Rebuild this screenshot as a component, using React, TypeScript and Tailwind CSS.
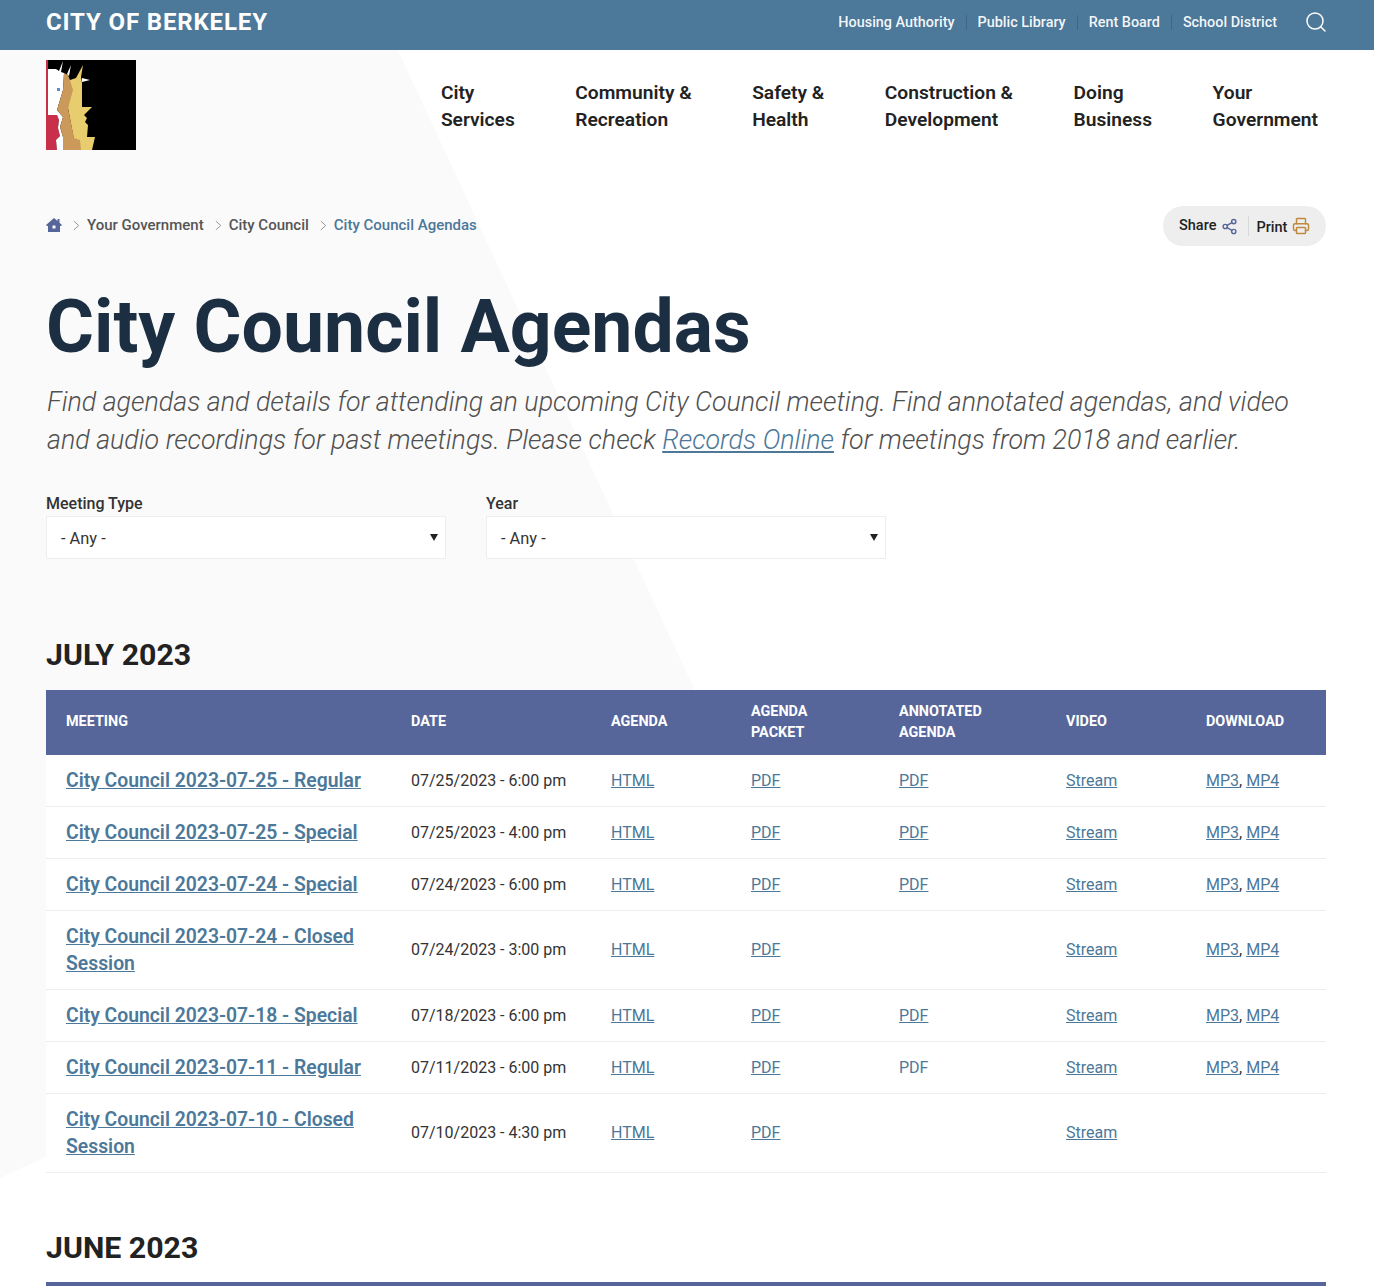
import { Printer, Search, Share2 } from "lucide-react";

const meetings = [
  { title: "City Council 2023-07-25 - Regular", date: "07/25/2023 - 6:00 pm", annotated: "link", downloads: true },
  { title: "City Council 2023-07-25 - Special", date: "07/25/2023 - 4:00 pm", annotated: "link", downloads: true },
  { title: "City Council 2023-07-24 - Special", date: "07/24/2023 - 6:00 pm", annotated: "link", downloads: true },
  { title: "City Council 2023-07-24 - Closed Session", date: "07/24/2023 - 3:00 pm", annotated: "none", downloads: true },
  { title: "City Council 2023-07-18 - Special", date: "07/18/2023 - 6:00 pm", annotated: "link", downloads: true },
  { title: "City Council 2023-07-11 - Regular", date: "07/11/2023 - 6:00 pm", annotated: "plain", downloads: true },
  { title: "City Council 2023-07-10 - Closed Session", date: "07/10/2023 - 4:30 pm", annotated: "none", downloads: false },
];

const navItems = [
  ["City", "Services"],
  ["Community &", "Recreation"],
  ["Safety &", "Health"],
  ["Construction &", "Development"],
  ["Doing", "Business"],
  ["Your", "Government"],
];

const topLinks = ["Housing Authority", "Public Library", "Rent Board", "School District"];

function Logo() {
  return (
    <svg viewBox="0 0 90 90" className="block h-[90px] w-[90px]">
      <rect width="90" height="90" fill="#000" />
      <polygon fill="#c92f4b" points="0,0 2,0 2,55 11,55 13,60 12,68 14,76 10,80 11,90 0,90" />
      <polygon
        fill="#fff"
        points="2,9 10,9 13,11 17,1 15,12 18,13 17,30 11,50 17,57 14,67 17,77 17,90 11,90 10,80 14,76 12,68 13,60 11,55 2,55"
      />
      <polygon
        fill="#e8cd6e"
        points="37,5 35,17 36,23 36,47 46,47 38,55 41,58 39,62 42,65 41,77 49,77 46,90 30,90 22,48 24,20 30,18"
      />
      <polygon
        fill="#cb9a5b"
        points="18,13 22,15 24,20 27,30 22,48 25,63 28,78 34,80 35,90 17,90 17,77 14,67 17,57 11,50 17,30"
      />
      <polygon fill="#fff" points="36,18 44,20 36,22" />
      <polygon fill="#fff" points="25,5 21,14 23,16" />
      <rect x="11" y="28" width="3" height="3" fill="#5b8fd0" />
    </svg>
  );
}

function HomeIcon() {
  return (
    <svg viewBox="0 0 16 14" className="h-[14px] w-4 fill-[#56669a]">
      <path d="M8 0 11.5 3V1H13.5V4.7L16 7 15 8H14V14H2V8H1L0 7ZM6.5 7.5V10.5H9.5V7.5Z" fillRule="evenodd" />
    </svg>
  );
}

function Crumb() {
  return (
    <svg viewBox="0 0 8 12" className="mr-[7px] ml-[11px] h-[11px] w-[7px] fill-none stroke-[#8a8a8a]">
      <path d="M1 1 6.5 6 1 11" />
    </svg>
  );
}

function SelectField({ label }: { label: string }) {
  return (
    <div className="w-[400px]">
      <label className="block text-[16px] leading-[24px] font-medium text-[#333]">{label}</label>
      <div className="relative">
        <select className="block h-[43px] w-full appearance-none rounded-none border border-[#eeeeee] bg-white px-[14px] pt-[3px] text-[16.4px] text-[#333]">
          <option>- Any -</option>
        </select>
        <span className="pointer-events-none absolute top-[18px] right-[8px] h-0 w-0 border-x-4 border-t-[7px] border-x-transparent border-t-[#222]" />
      </div>
    </div>
  );
}

function Link({ children }: { children: string }) {
  return <a className="text-[#4c7899] underline">{children}</a>;
}

const th = "pt-0 pb-[2px] pl-5 text-left align-middle text-[14.4px] leading-[21px] font-bold uppercase text-white";
const td = "border-b border-[#eeeeee] py-[11.8px] pl-5 align-middle text-[16px] text-[#333]";

function MeetingTable() {
  return (
    <table className="w-full table-fixed border-collapse bg-white">
      <colgroup>
        <col className="w-[345px]" />
        <col className="w-[200px]" />
        <col className="w-[140px]" />
        <col className="w-[148px]" />
        <col className="w-[167px]" />
        <col className="w-[140px]" />
        <col className="w-[140px]" />
      </colgroup>
      <thead>
        <tr className="h-[65.3px] bg-[#56669a]">
          <th className={th}>Meeting</th>
          <th className={th}>Date</th>
          <th className={th}>Agenda</th>
          <th className={th}>
            Agenda
            <br />
            Packet
          </th>
          <th className={th}>
            Annotated
            <br />
            Agenda
          </th>
          <th className={th}>Video</th>
          <th className={th}>Download</th>
        </tr>
      </thead>
      <tbody>
        {meetings.map((m) => (
          <tr key={m.title}>
            <td className={td}>
              <a className="block text-[19.35px] leading-[27.33px] font-semibold text-[#4c7899] underline">{m.title}</a>
            </td>
            <td className={td}>{m.date}</td>
            <td className={td}>
              <Link>HTML</Link>
            </td>
            <td className={td}>
              <Link>PDF</Link>
            </td>
            <td className={td}>
              {m.annotated === "link" && <Link>PDF</Link>}
              {m.annotated === "plain" && <span className="text-[#4c7899]">PDF</span>}
            </td>
            <td className={td}>
              <Link>Stream</Link>
            </td>
            <td className={td}>
              {m.downloads && (
                <>
                  <Link>MP3</Link>, <Link>MP4</Link>
                </>
              )}
            </td>
          </tr>
        ))}
      </tbody>
    </table>
  );
}

export default function App() {
  return (
    <div className="relative h-[1286px] overflow-hidden bg-white font-['Roboto',sans-serif]">
      {/* grey wedge behind the page */}
      <div className="absolute top-[50px] left-0 h-[1136px] w-[800px] bg-[#fafafa] [clip-path:polygon(0_0,398px_0,760px_781px,0_1128px)]" />

      <div className="relative">
        <header className="flex h-[50px] items-start justify-between bg-[#4c7899] pr-[48px] pl-[46px]">
          <a className="mt-[6px] text-[24px] leading-[32px] font-bold tracking-[0.85px] text-white">CITY OF BERKELEY</a>
          <div className="flex items-center pt-[10px]">
            <nav className="flex items-center pt-px">
              {topLinks.map((l, i) => (
                <a
                  key={l}
                  className={
                    i === 0
                      ? "text-[14.4px] leading-[15px] font-medium text-white/95"
                      : "ml-[11px] border-l border-[#3f6684] pl-[11px] text-[14.4px] leading-[15px] font-medium text-white/95"
                  }
                >
                  {l}
                </a>
              ))}
            </nav>
            <Search className="mr-[-2px] ml-[27px] h-[24px] w-[24px] text-white" strokeWidth={1.5} />
          </div>
        </header>

        <div className="flex h-[110px] items-start justify-between pt-[10px] pr-[48px] pl-[46px]">
          <Logo />
          <nav className="mr-2 flex gap-[60.5px] pt-[19px]">
            {navItems.map(([a, b]) => (
              <a key={a} className="text-[19.2px] leading-[27.33px] font-semibold text-[#222]">
                {a}
                <br />
                {b}
              </a>
            ))}
          </nav>
        </div>

        <main className="pr-[48px] pl-[46px]">
          <div className="mt-[46px] flex h-[40px] items-center justify-between">
            <div className="flex items-center pb-[2px] text-[15px] font-medium text-[#555]">
              <HomeIcon />
              <Crumb />
              <a>Your Government</a>
              <Crumb />
              <a>City Council</a>
              <Crumb />
              <a className="text-[#4c7899]">City Council Agendas</a>
            </div>
            <div className="flex h-[40px] w-[163px] items-center rounded-full bg-[#eeeeee] pl-4 text-[14.5px] font-medium text-[#222]">
              <span>Share</span>
              <Share2 className="ml-[5px] h-[17px] w-[17px] text-[#56669a]" strokeWidth={2} />
              <span className="mr-[7px] ml-[10px] h-[20px] w-px bg-[#d8d8d8]" />
              <span className="pt-[3px]">Print</span>
              <Printer className="ml-[5px] h-[18px] w-[18px] text-[#c08a3e]" strokeWidth={2} />
            </div>
          </div>

          <h1 className="mt-[36px] text-[73.4px] leading-[90px] font-bold text-[#1b2e42]">City Council Agendas</h1>
          <p className="mt-[11px] pl-px text-[26.8px] leading-[38px] font-light text-[#505050] italic">
            Find agendas and details for attending an upcoming City Council meeting. Find annotated agendas, and video
            and audio recordings for past meetings. Please check{" "}
            <a className="text-[#4c7899] underline">Records Online</a> for meetings from 2018 and earlier.
          </p>

          <div className="mt-[33px] flex gap-10">
            <SelectField label="Meeting Type" />
            <SelectField label="Year" />
          </div>

          <h2 className="mt-[76px] text-[30.3px] leading-[40px] font-bold text-[#222]">JULY 2023</h2>
          <div className="mt-[15px]">
            <MeetingTable />
          </div>

          <h2 className="mt-[55px] text-[30.3px] leading-[40px] font-bold text-[#222]">JUNE 2023</h2>
          <div className="mt-[14px] h-[65px] bg-[#56669a]" />
        </main>
      </div>
    </div>
  );
}
